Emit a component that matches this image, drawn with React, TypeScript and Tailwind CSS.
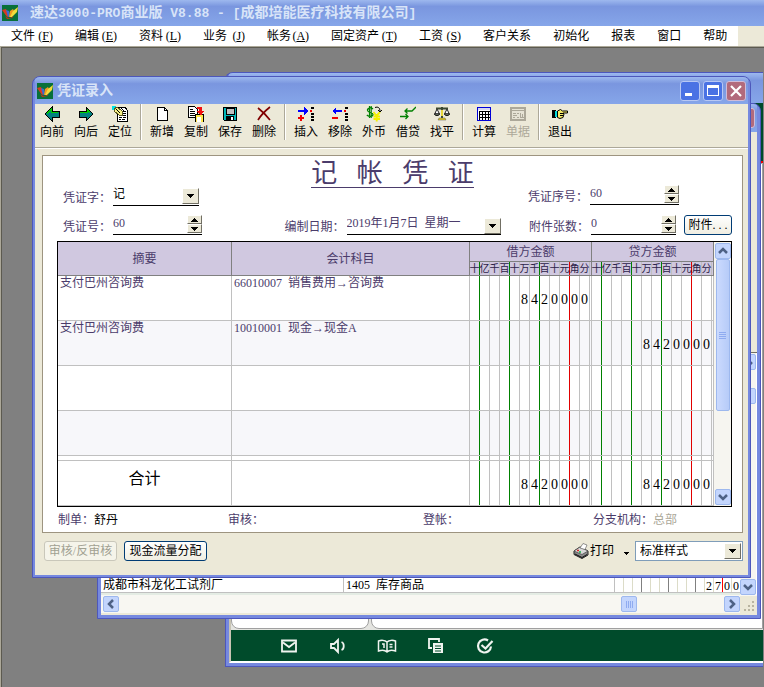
import React from 'react';

interface ToolItem {
  label: string;
  icon: React.ReactNode;
  disabled?: boolean;
}

interface VoucherRow {
  summary: string;
  account: string;
  debit: string;
  credit: string;
}

const menuItems = [
  { label: '文件', key: 'F' },
  { label: '编辑', key: 'E' },
  { label: '资料', key: 'L' },
  { label: '业务', key: 'J' },
  { label: '帐务', key: 'A' },
  { label: '固定资产', key: 'T' },
  { label: '工资', key: 'S' },
  { label: '客户关系' },
  { label: '初始化' },
  { label: '报表' },
  { label: '窗口' },
  { label: '帮助' },
];

const units = ['十', '亿', '千', '百', '十', '万', '千', '百', '十', '元', '角', '分'];

const rows: VoucherRow[] = [
  { summary: '支付巴州咨询费', account: '66010007  销售费用→咨询费', debit: '8420000', credit: '' },
  { summary: '支付巴州咨询费', account: '10010001  现金→现金A', debit: '', credit: '8420000' },
  { summary: '', account: '', debit: '', credit: '' },
  { summary: '', account: '', debit: '', credit: '' },
];

const Icon: React.FC<{ children: React.ReactNode; smooth?: boolean }> = ({ children, smooth }) => (
  <svg viewBox="0 0 16 16" className="w-4 h-4 shrink-0" shapeRendering={smooth ? 'auto' : 'crispEdges'} fill="none" aria-hidden="true">
    {children}
  </svg>
);

const toolGroups: ToolItem[][] = [
  [
    {
      label: '向前',
      icon: (
        <Icon>
          <path d="M1 8L8 1v4h7v6H8v4z" fill="#008080" stroke="#000" />
          <path d="M3 7.5L7 3.5v3h7" stroke="#00d000" />
        </Icon>
      ),
    },
    {
      label: '向后',
      icon: (
        <Icon>
          <path d="M15 8L8 1v4H1v6h7v4z" fill="#008080" stroke="#000" />
          <path d="M2 6.5h7v-3l3 3" stroke="#00d000" />
        </Icon>
      ),
    },
    {
      label: '定位',
      icon: (
        <Icon>
          <path d="M5 1h8l2 3v11H5z" fill="#fff" stroke="#000" />
          <path d="M7 9h2M10 9h4M7 11h3M11 11h3M7 13h2M10 13h3M11 5h3M11 7h3" stroke="#000" />
          <path d="M0 0h4v2H2v2H0z" fill="#00e0e0" />
          <path d="M2 3l3-2 5 4v4H7L2 5z" fill="#f5f08a" stroke="#5c5820" />
          <path d="M4 3l4 4M9 2l3 3" stroke="#000" />
        </Icon>
      ),
    },
  ],
  [
    {
      label: '新增',
      icon: (
        <Icon>
          <path d="M3.5 1.5h7l3 3v10h-10z" fill="#fff" stroke="#000" />
          <path d="M10.5 1.5v3h3" stroke="#000" />
        </Icon>
      ),
    },
    {
      label: '复制',
      icon: (
        <Icon>
          <path d="M.5.5h6l3 3v8h-9z" fill="#fff" stroke="#000" />
          <path d="M2 3.5h3M2 5.5h5M2 7.5h5M2 9.5h5" stroke="#000" />
          <path d="M7 8h9v8H7z" fill="#ffe94a" />
          <path d="M7.5 16V8.500h8V16" stroke="#000" />
          <path d="M9 11h4v5H9z" fill="#fff" />
          <path d="M9 1h5v4h2l-3 5-4-5h2V3H9z" fill="#f01010" />
        </Icon>
      ),
    },
    {
      label: '保存',
      icon: (
        <Icon>
          <path d="M1.500 1.500h13v13h-12l-1-1z" fill="#00b8b8" stroke="#000" />
          <path d="M4 2h8v6H4z" fill="#c0c0c0" stroke="#000" />
          <path d="M4 10h8v5H4z" fill="#000" />
          <path d="M9 11h2v3H9z" fill="#fff" />
        </Icon>
      ),
    },
    {
      label: '删除',
      icon: (
        <Icon smooth>
          <path d="M2 2c4 3 8 7 12 12M14 1C9 5 5 9 2 14" stroke="#800000" strokeWidth="1.700" />
        </Icon>
      ),
    },
  ],
  [
    {
      label: '插入',
      icon: (
        <Icon>
          <path d="M0 4h6V1l4 4-4 4V6H0z" fill="#0000ff" />
          <path d="M0 11h2V9h2v2h2v2H4v2H2v-2H0z" fill="#f00000" />
          <path d="M13 1h3v2h-3zM13 7h3v2h-3zM13 10h3v2h-3zM13 13h3v2h-3z" fill="#000" />
          <path d="M12 4h2v2h-2z" fill="#f00000" />
        </Icon>
      ),
    },
    {
      label: '移除',
      icon: (
        <Icon>
          <path d="M10 4H4V1L0 5l4 4V6h6z" fill="#0000ff" />
          <path d="M0 11h6v2H0z" fill="#f00000" />
          <path d="M13 1h3v2h-3zM13 7h3v2h-3zM13 10h3v2h-3zM13 13h3v2h-3z" fill="#000" />
          <path d="M12 4h2v2h-2z" fill="#f00000" />
        </Icon>
      ),
    },
    {
      label: '外币',
      icon: (
        <Icon smooth>
          <path d="M7 3C5 1 1 2 1.500 4.500S7 6 7 8.500 3 11 .8 9M3.500 0v12M5.200 0v12" stroke="#008000" strokeWidth="1.200" />
          <path d="M7.500 6l3 4 3.500-4M10.700 10v5.500M7.500 10.500h6.500M7.500 13h6.500" stroke="#f5f000" strokeWidth="1.900" />
          <path d="M9 1.500c3-1 5 0 5 4M12 4l2 2 2-2" stroke="#000" />
        </Icon>
      ),
    },
    {
      label: '借贷',
      icon: (
        <Icon smooth>
          <path d="M16 1l-4 4H5M7.500 2.500L5 5l2.500 2.500M0 10.500h8M5.500 8L8 10.500 5.500 13" stroke="#008000" strokeWidth="1.300" />
        </Icon>
      ),
    },
    {
      label: '找平',
      icon: (
        <Icon smooth>
          <path d="M2 2.500h12M8 1v11" stroke="#3c4830" strokeWidth="2" />
          <path d="M3 3L.7 8h4.800zM13 3l-2.500 5h4.800z" fill="#fff" stroke="#222" />
          <path d="M.5 8h5c0 2-5 2-5 0zM10.500 8h5c0 2-5 2-5 0z" fill="#c8dcc0" stroke="#000" />
          <path d="M7 4h2v6H7z" fill="#e8d83c" />
          <path d="M5 12h6l1 2H4z" fill="#e8d020" stroke="#555" strokeWidth=".5" />
        </Icon>
      ),
    },
  ],
  [
    {
      label: '计算',
      icon: (
        <Icon>
          <path d="M1.500 1.500h13v13h-13z" fill="#fff" stroke="#0000d8" strokeWidth="1.500" />
          <path d="M2 2h12v2H2z" fill="#d8d8f0" />
          <path d="M3 5.500h11M3 8.500h11M3 11.500h11M3.500 5v9M6.500 5v9M9.500 5v9M12.500 5v9" stroke="#000" />
        </Icon>
      ),
    },
    {
      label: '单据',
      disabled: true,
      icon: (
        <Icon>
          <path d="M1 2h14v12H1z" fill="#e6e3d5" stroke="#aca899" strokeWidth="2" />
          <path d="M2 4.500h12M3 7.500h3M7 7.500h2M3 9.500h4M3 11.500h2M7 11.500h2" stroke="#aca899" />
          <path d="M10 7v4M12 8v3M14 7v4M10 11.500h4" stroke="#aca899" />
        </Icon>
      ),
    },
  ],
  [
    {
      label: '退出',
      icon: (
        <Icon smooth>
          <path d="M0 4h4v8H0z" fill="#000" />
          <path d="M3 5h2v6H3z" fill="#00d8d8" />
          <path d="M5.500 5l3-1.500 2 1.500h5v2h-4.500l1 1-1 3.500-3 1-2.500-1z" fill="#f5e868" stroke="#000" />
          <path d="M8 7.500h3M8 9.500h3" stroke="#000" />
        </Icon>
      ),
    },
  ],
];

const AppLogo = () => (
  <Icon smooth>
    <path d="M0 0h16v16H0z" fill="#08703a" />
    <path d="M0 5l4-1 3 7-2 1z" fill="#d83a20" />
    <path d="M4 5l3 1 1 5-2 1z" fill="#3a6ad0" />
    <path d="M7 12l1-6 3-2 1 2-3 6z" fill="#f09a20" />
    <path d="M8 12l3-6 5-4-1 5-5 5z" fill="#f2dc3c" />
    <path d="M3 11c3 3 7 3 11-3l-4 5-5 1z" fill="#d82818" />
  </Icon>
);

const Triangle: React.FC<{ up?: boolean }> = ({ up }) => (
  <svg viewBox="0 0 7 4" className="w-[7px] h-1" shapeRendering="crispEdges" aria-hidden="true">
    <path d={up ? 'M0 4L3.500 0 7 4z' : 'M0 0h7L3.500 4z'} fill="#000" />
  </svg>
);

const DropArrow = () => (
  <span className="pointer-events-none flex h-4 w-[17px] shrink-0 items-center justify-center border border-t-white border-l-white border-r-[#716f64] border-b-[#716f64] bg-[#ece9d8]">
    <Triangle />
  </span>
);

const Spinner = () => (
  <span className="flex w-[15px] shrink-0 flex-col">
    {[true, false].map((up) => (
      <button
        key={String(up)}
        aria-label={up ? '增加' : '减少'}
        className="flex h-[9px] items-center justify-center border border-t-white border-l-white border-r-[#716f64] border-b-[#716f64] bg-[#ece9d8]"
      >
        <Triangle up={up} />
      </button>
    ))}
  </span>
);

interface FieldProps {
  id: string;
  label: string;
  value: string;
  width: string;
  kind: 'spin' | 'drop' | 'select';
}

const Field: React.FC<FieldProps> = ({ id, label, value, width, kind }) => (
  <div className="flex h-5 items-end">
    <label htmlFor={id} className="mr-[2px] shrink-0 leading-4">{label}</label>
    <span className={`flex h-5 border-b border-black ${width}`}>
      {kind === 'select' ? (
        <span className="relative flex flex-1">
          <select id={id} defaultValue={value} className="h-4 w-full appearance-none bg-transparent leading-4 text-black outline-none">
            <option>{value}</option>
          </select>
          <span className="absolute right-0 top-[2px]"><DropArrow /></span>
        </span>
      ) : (
        <>
          <input id={id} defaultValue={value} className="h-4 w-full min-w-0 bg-transparent outline-none" />
          {kind === 'spin' ? (
            <Spinner />
          ) : (
            <button aria-label="选择日期" className="mt-[2px]"><DropArrow /></button>
          )}
        </>
      )}
    </span>
  </div>
);

const lineColor = (i: number) => {
  if (i === 0 || i === 3 || i === 6) return 'border-[#008000]';
  if (i === 9) return 'border-[#e00000]';
  return 'border-[#c0c0c0]';
};

const Digits: React.FC<{ value: string; height: string }> = ({ value, height }) => {
  const chars = value.padStart(12, ' ').split('');
  return (
    <div className={`flex ${height}`}>
      {chars.map((c, i) => (
        <span key={i} className={`flex w-[10px] shrink-0 items-center justify-center border-r pt-1 text-sm leading-none ${lineColor(i)}`}>
          <span className="text-black">{c}</span>
        </span>
      ))}
    </div>
  );
};

const UnitHeader = () => (
  <th className="border-r border-b border-[#808080] p-0 font-normal">
    <div className="flex h-[13px]">
      {units.map((u, i) => (
        <span key={i} className={`flex w-[10px] shrink-0 items-center justify-center border-r text-[10px] leading-none text-[#2c2248] ${lineColor(i)}`}>
          {u}
        </span>
      ))}
    </div>
  </th>
);

const ScrollButton: React.FC<{ dir: 'up' | 'down' | 'left' | 'right' }> = ({ dir }) => {
  const paths = {
    up: 'M4 10l4-4 4 4',
    down: 'M4 6l4 4 4-4',
    left: 'M10 4L6 8l4 4',
    right: 'M6 4l4 4-4 4',
  };
  return (
    <button aria-label={dir} className="flex h-4 w-4 shrink-0 items-center justify-center rounded-xs border border-[#9db8ee] bg-[#c3d5fd]">
      <svg viewBox="0 0 16 16" className="h-4 w-4 shrink-0" fill="none" aria-hidden="true">
        <path d={paths[dir]} stroke="#4d6185" strokeWidth="2.500" />
      </svg>
    </button>
  );
};

const VoucherTable = () => (
  <div className="ml-[14px] mr-[10px] flex border border-black bg-white">
    <table className="w-full table-fixed border-separate border-spacing-0 leading-[14px]">
      <colgroup>
        <col className="w-[174px]" />
        <col />
        <col className="w-[122px]" />
        <col className="w-[122px]" />
      </colgroup>
      <thead className="bg-[#d0c8e0]">
        <tr>
          <th rowSpan={2} className="border-r border-b border-[#808080] p-0 font-normal">摘要</th>
          <th rowSpan={2} className="border-r border-b border-[#808080] p-0 font-normal">会计科目</th>
          <th className="h-5 border-r border-b border-[#808080] p-0 font-normal">借方金额</th>
          <th className="h-5 border-r border-b border-[#808080] p-0 font-normal">贷方金额</th>
        </tr>
        <tr>
          <UnitHeader />
          <UnitHeader />
        </tr>
      </thead>
      <tbody>
        {rows.map((row, i) => (
          <tr key={i} className={i % 2 ? 'bg-[#f7f7fa]' : 'bg-white'}>
            <td className="border-r border-b border-[#c0c0c0] px-[2px] py-0 align-top">{row.summary}</td>
            <td className="whitespace-pre border-r border-b border-[#c0c0c0] px-[2px] py-0 align-top">{row.account}</td>
            <td className="border-r border-b border-[#c0c0c0] p-0"><Digits value={row.debit} height="h-11" /></td>
            <td className="border-r border-b border-[#c0c0c0] p-0"><Digits value={row.credit} height="h-11" /></td>
          </tr>
        ))}
        <tr aria-hidden="true">
          <td className="border-r border-b border-[#c0c0c0] p-0" />
          <td className="border-r border-b border-[#c0c0c0] p-0" />
          <td className="border-r border-b border-[#c0c0c0] p-0"><Digits value="" height="h-1" /></td>
          <td className="border-r border-b border-[#c0c0c0] p-0"><Digits value="" height="h-1" /></td>
        </tr>
      </tbody>
      <tfoot>
        <tr>
          <td className="border-r border-b border-[#c0c0c0] p-0 pb-2 text-center text-base leading-5 text-black">合计</td>
          <td className="border-r border-b border-[#c0c0c0] p-0" />
          <td className="border-r border-b border-[#c0c0c0] p-0"><Digits value="8420000" height="h-11" /></td>
          <td className="border-r border-b border-[#c0c0c0] p-0"><Digits value="8420000" height="h-11" /></td>
        </tr>
      </tfoot>
    </table>
    <div className="flex w-[17px] shrink-0 flex-col items-center bg-[#f6f5f0] py-px">
      <ScrollButton dir="up" />
      <div className="flex h-[152px] w-[14px] items-center justify-center rounded-xs border border-[#9db8ee] bg-linear-to-r from-[#cbdafe] to-[#b6cbf8]">
        <div className="flex flex-col gap-px">
          {[0, 1, 2, 3].map((i) => (
            <span key={i} className="h-px w-[7px] bg-[#8fabf0]" />
          ))}
        </div>
      </div>
      <div className="flex-1" />
      <ScrollButton dir="down" />
    </div>
  </div>
);

const Toolbar = () => (
  <div className="flex h-[45px] items-start border-b border-white bg-[#ece9d8]">
    <div className="flex h-11 w-full items-start border-b border-[#aca899]">
      {toolGroups.map((group, g) => (
        <React.Fragment key={g}>
          {g > 0 && (
            <span className="flex h-9 w-2 justify-center">
              <span className="w-[2px] border-l border-r border-l-[#aca899] border-r-white" />
            </span>
          )}
          {group.map((tool) => (
            <button
              key={tool.label}
              disabled={tool.disabled}
              className="flex w-[34px] flex-col items-center pt-[2px] text-black disabled:text-[#aca899]"
            >
              {tool.icon}
              <span className="mt-[2px] leading-4">{tool.label}</span>
            </button>
          ))}
        </React.Fragment>
      ))}
    </div>
  </div>
);

const VoucherDialog = () => (
  <section aria-label="凭证录入" className="relative overflow-hidden rounded-t-lg border border-[#4d57bb] bg-[#7689df] px-[2px] pb-[2px]">
    <header className="flex h-[27px] items-center bg-linear-to-b from-[#9db8ee] via-[#7a96df] via-25% to-[#86a6e9] pl-[2px] pr-[2px]">
      <AppLogo />
      <h1 className="ml-1 flex-1 text-sm font-bold text-[#d8e4f8]">凭证录入</h1>
      <div className="flex gap-[3px]">
        <button aria-label="最小化" className="flex h-5 w-5 items-end rounded-[3px] border border-[#b8c8f4] bg-[#4a72e4] p-1">
          <span className="h-[3px] w-[7px] bg-white" />
        </button>
        <button aria-label="最大化" className="flex h-5 w-5 items-center justify-center rounded-[3px] border border-[#b8c8f4] bg-[#4a72e4]">
          <span className="h-[11px] w-3 border border-t-[3px] border-white" />
        </button>
        <button aria-label="关闭" className="flex h-5 w-5 items-center justify-center rounded-[3px] border border-[#d0bcd8] bg-[#b26a7c]">
          <svg viewBox="0 0 12 12" className="h-3 w-3" aria-hidden="true">
            <path d="M1 1l10 10M11 1L1 11" stroke="#fff" strokeWidth="2.200" />
          </svg>
        </button>
      </div>
    </header>

    <div className="bg-[#ece9d8]">
      <Toolbar />
      <div className="pl-[7px] pr-[5px] pt-[6px]">
        <div className="border border-[#9d9480] bg-white text-[#4b3c6b]">
          <div className="grid grid-cols-[1fr_216px_1fr] items-end px-[10px] pb-[6px]">
            <div className="flex flex-col gap-[9px] pl-[10px]">
              <Field id="word" label="凭证字：" value="记" width="w-[86px]" kind="select" />
              <Field id="number" label="凭证号：" value="60" width="w-[89px]" kind="spin" />
            </div>
            <div className="pt-1">
              <div className="flex h-7 justify-center">
                <h2 className="whitespace-pre border-b border-[#4b3c6b] text-[26px] leading-7">记   帐   凭   证</h2>
              </div>
              <div className="mt-[27px]">
                <Field id="date" label="编制日期：" value="2019年1月7日  星期一" width="w-[154px]" kind="drop" />
              </div>
            </div>
            <div className="flex flex-col items-end gap-[10px]">
              <div className="mr-[53px]">
                <Field id="serial" label="凭证序号：" value="60" width="w-[89px]" kind="spin" />
              </div>
              <div className="flex items-end">
                <Field id="attachments" label="附件张数：" value="0" width="w-[85px]" kind="spin" />
                <button className="ml-2 h-5 w-12 whitespace-nowrap rounded-[3px] border border-[#003c74] bg-linear-to-b from-white to-[#f0eee2] text-black">
                  附件. . .
                </button>
              </div>
            </div>
          </div>

          <VoucherTable />

          <div className="ml-[15px] mr-[10px] grid h-[25px] grid-cols-[170px_1fr_170px_139px] items-center">
            <span>制单：<span className="text-black">舒丹</span></span>
            <span>审核：</span>
            <span>登帐：</span>
            <span>分支机构：<span className="text-[#aca899]">总部</span></span>
          </div>
        </div>
      </div>

      <footer className="flex h-[42px] items-start pl-[9px] pr-[5px] pt-2 text-black">
        <button disabled className="h-5 w-[73px] rounded-[3px] border border-[#c9c7ba] bg-[#f5f4ea] text-[#a1a192]">审核/反审核</button>
        <button className="ml-[7px] h-5 w-[83px] rounded-[3px] border border-[#003c74] bg-linear-to-b from-white to-[#f0eee2] whitespace-nowrap">
          现金流量分配
        </button>
        <div className="flex-1" />
        <button className="flex h-5 items-center">
          <Icon smooth>
            <path d="M1 8l6-4 8 4v4l-6 3.500-8-4z" fill="#8a8a8a" stroke="#222" />
            <path d="M1 8l6-4 8 4-6 3.500z" fill="#d8d8d8" stroke="#444" strokeWidth=".7" />
            <path d="M7 5l3-4.500 4 1.500-2 4.500z" fill="#fff" stroke="#666" strokeWidth=".7" />
            <path d="M4 7.500h2" stroke="#e02020" strokeWidth="1.500" />
            <path d="M6 9h2" stroke="#10b040" strokeWidth="1.500" />
            <path d="M2 11l7 3.500 5-3" stroke="#111" />
          </Icon>
          <span className="ml-px leading-4">打印</span>
          <svg viewBox="0 0 5 3" className="ml-[10px] mt-1 h-[3px] w-[5px]" shapeRendering="crispEdges" aria-hidden="true">
            <path d="M0 0h5L2.500 3z" fill="#000" />
          </svg>
        </button>
        <div className="relative ml-[6px] w-[108px]">
          <select aria-label="打印样式" defaultValue="标准样式" className="h-5 w-full appearance-none border border-[#7f9db9] bg-white px-1 leading-4 text-black">
            <option>标准样式</option>
          </select>
          <span className="absolute right-[2px] top-[2px]"><DropArrow /></span>
        </div>
      </footer>
    </div>
  </section>
);

const ledgerLine = (i: number) => {
  if (i === 12) return 'border-[#ff0000]';
  if (i === 3 || i === 6 || i === 9) return 'border-[#808080]';
  return 'border-[#dcdcc8]';
};

// ledger list behind the voucher dialog
const LedgerWindow = () => (
  <section className="absolute bottom-[68px] left-[95px] right-[3px] top-[55px] flex flex-col overflow-hidden rounded-t-lg border border-[#4d57bb] bg-[#7689df] px-[3px] pb-[3px] text-black">
    <header className="flex h-7 shrink-0 items-center justify-end bg-linear-to-b from-[#9db8ee] via-[#7a96df] via-25% to-[#86a6e9] pr-[2px]">
      <span className="h-5 w-5 rounded-[3px] border border-[#d0bcd8] bg-[#b26a7c]" />
    </header>
    <div className="flex flex-1 flex-col bg-[#ece9d8] pb-[2px]">
      <div className="h-[221px] border-b border-[#716f64]" />
      <div className="flex flex-1 flex-col bg-white">
        <div className="flex flex-1">
          <div className="flex flex-1 flex-col justify-end">
            <div className="flex h-[18px] overflow-hidden border-b border-[#c0c0c0]">
              <span className="w-[243px] border-r border-[#c0c0c0] pl-[2px] leading-5">成都市科龙化工试剂厂</span>
              <span className="flex-1 whitespace-pre border-r border-[#c0c0c0] pl-[2px] leading-5">1405  库存商品</span>
              <span className="flex w-[125px] overflow-hidden">
                {'          2700'.split('').map((c, i) => (
                  <span key={i} className={`flex w-[9px] shrink-0 items-center justify-center border-r pt-1 ${ledgerLine(i + 1)}`}>
                    {c}
                  </span>
                ))}
              </span>
            </div>
            <div className="h-[2px] bg-[#e4ece4]" />
          </div>
          <div className="mr-px flex w-4 flex-col bg-[#f6f5f0] pt-px">
            <ScrollButton dir="up" />
            <span className="mt-[18px] h-4 w-4 rounded-xs border border-[#9db8ee] bg-[#c3d5fd]" />
            <div className="flex-1" />
            <ScrollButton dir="down" />
          </div>
        </div>
        <div className="flex h-[18px] items-center bg-[#f8f7f2] pl-[2px] pr-0">
          <ScrollButton dir="left" />
          <div className="flex-1" />
          <div className="mr-[87px] flex h-4 w-4 items-center justify-center gap-px rounded-xs border border-[#9db8ee] bg-[#c3d5fd]">
            {[0, 1, 2, 3].map((i) => (
              <span key={i} className="h-[7px] w-px bg-[#8fabf0]" />
            ))}
          </div>
          <ScrollButton dir="right" />
          <svg viewBox="0 0 17 17" className="h-[17px] w-[17px] bg-[#ece9d8]" aria-hidden="true">
            <path d="M12 5h2v2h-2zM8 9h2v2H8zM12 9h2v2h-2zM4 13h2v2H4zM8 13h2v2H8zM12 13h2v2h-2z" fill="#b8b4a0" />
          </svg>
        </div>
      </div>
    </div>
  </section>
);

const statusIcons = [
  <path key="mail" d="M1 2.500h14v11H1zM2 4.500l6 4.500 6-4.500" strokeWidth="1.800" />,
  <path key="sound" d="M1 6v4h3l4 4V2L4 6zM11.500 4c3 1 3 7 0 8" strokeWidth="1.800" />,
  <path key="book" d="M8 4C6 2 2 2-.5 3v10c3-1 6.500-1 8.500 1 2-2 5.500-2 8.500-1V3C14 2 10 2 8 4zv9M3 6h2v4M10.500 6.500h3M10.500 9h3" strokeWidth="1.500" />,
  <g key="copy">
    <path d="M4 10H1V1h10v3" strokeWidth="1.800" />
    <path d="M5 5h10v10H5z" fill="#f0f4f0" stroke="none" />
    <path d="M7 8h6M7 10.500h6M7 13h6" stroke="#004b2b" />
  </g>,
  <path key="check" d="M11 2.500a6.500 6.500 0 1 0 3 6M4.500 7l4 3.500L15.500 3" strokeWidth="2.200" />,
];

const HomeWindow = () => (
  <section className="absolute bottom-5 left-[223px] right-px top-6 flex flex-col overflow-hidden rounded-tl-lg border border-r-0 border-[#4d57bb] bg-[#7689df] pb-[3px] pl-[3px]">
    <header className="h-[30px] shrink-0 bg-linear-to-b from-[#9db8ee] via-[#7a96df] via-25% to-[#86a6e9]" />
    <div className="flex flex-1 flex-col border-b-2 border-l-2 border-b-white border-l-[#c8c4b4] bg-white">
      <div className="h-[60px] border-b-2 border-b-[#f00000] bg-[#004b2b]" />
      <div className="flex flex-1 items-stretch gap-[2px] bg-[#e4e4e0] pb-px">
        <div className="w-[138px] rounded-b-lg border border-[#a0a0a0] bg-white" />
        <div className="flex-1 rounded-bl-lg border border-[#a0a0a0] bg-white" />
      </div>
      <nav aria-label="状态栏" className="flex h-[31px] items-center bg-[#004b2b] pl-[33px]">
        {statusIcons.map((icon, i) => (
          <button key={i} aria-label={['邮件', '声音', '手册', '复制', '任务'][i]} className="flex w-[49px] justify-center">
            <svg viewBox="0 0 16 16" className="h-4 w-4 overflow-visible" fill="none" stroke="#f0f4f0" aria-hidden="true">
              {icon}
            </svg>
          </button>
        ))}
      </nav>
    </div>
  </section>
);

const App: React.FC = () => {
  return (
    <div className="flex min-h-screen flex-col bg-[#808080] text-xs font-['Liberation_Serif','Noto_Sans_CJK_SC',serif]">
      <header className="flex h-[26px] items-center overflow-hidden whitespace-nowrap bg-linear-to-b from-[#9db8ee] via-[#7a96df] via-25% to-[#86a6e9] pl-[2px]">
        <AppLogo />
        <p className="ml-3 text-sm font-bold text-[#d8e4f8]">
          速达
          <span className="font-['Liberation_Mono',monospace] text-[13px]">3000-PRO</span>
          商业版
          <span className="whitespace-pre font-['Liberation_Mono',monospace] text-[13px]"> V8.88 - [</span>
          成都培能医疗科技有限公司
          <span className="font-['Liberation_Mono',monospace] text-[13px]">]</span>
        </p>
      </header>

      <nav aria-label="主菜单" className="flex h-[21px] border-b border-[#aca899] bg-[#ece9d8] text-black">
        {menuItems.map((item) => (
          <button key={item.label} className="flex items-center whitespace-nowrap bg-white px-[11px] leading-4">
            {item.label}
            {item.key && (
              <span className="w-[18px] text-right">
                (<u>{item.key}</u>)
              </span>
            )}
          </button>
        ))}
      </nav>

      <main className="flex-1 border-l border-[#aca899]">
        <div className="relative border-l border-t border-[#5c5a50] pb-[109px] pl-[30px] pr-[13px] pt-7">
          <HomeWindow />
          <LedgerWindow />
          <VoucherDialog />
        </div>
      </main>
    </div>
  );
};

export default App;
